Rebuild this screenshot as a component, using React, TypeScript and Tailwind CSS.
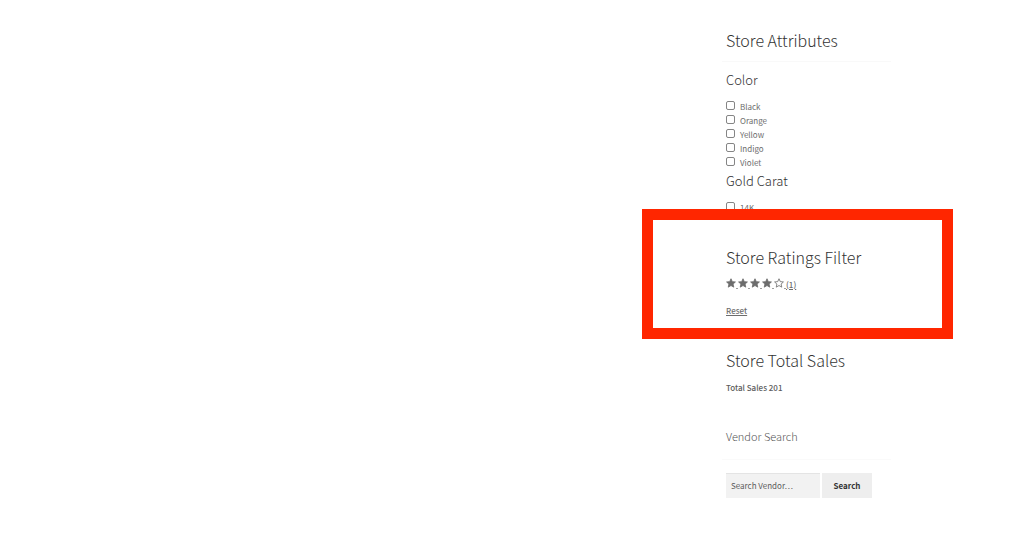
import type { ReactNode } from "react";

interface AttributeGroupProps {
  title: string;
  options: string[];
}

function WidgetTitle({ children }: { children: ReactNode }) {
  return (
    <h2 className="text-[16px] leading-6 font-light text-[#333333] whitespace-nowrap">
      {children}
    </h2>
  );
}

function AttributeGroup({ title, options }: AttributeGroupProps) {
  return (
    <section>
      <h3 className="text-[13px] leading-6 font-light text-[#333333]">{title}</h3>
      <ul className="mt-[7px]">
        {options.map((option) => (
          <li key={option}>
            <label className="flex h-3.5 items-center gap-[5px] text-[8px] leading-3.5 text-[#6d6d6d]">
              <input
                type="checkbox"
                className="mb-0.5 h-[9px] w-[9px] shrink-0 appearance-none rounded-[2px] border border-[#858585] bg-white checked:bg-[#6d6d6d]"
              />
              <span className="pt-0.5">{option}</span>
            </label>
          </li>
        ))}
      </ul>
    </section>
  );
}

function Star({ filled }: { filled: boolean }) {
  return (
    <svg
      viewBox="0 0 24 24"
      className="h-2.5 w-2.5"
      fill={filled ? "#6d6d6d" : "none"}
      stroke="#6d6d6d"
      strokeWidth="2"
    >
      <path d="M12 1.8l3.1 6.9 7.5.8-5.6 5 1.6 7.4-6.6-3.8-6.6 3.8L7 14.5l-5.6-5 7.5-.8z" />
    </svg>
  );
}

function RatingsFilter() {
  return (
    <section className="relative -mt-[5px] -mr-[66px] -ml-[84px] border-[11px] border-[#ff2600] pt-[25px] pb-[9px] pl-[73px] text-[8px] leading-4 text-[#6d6d6d]">
      <WidgetTitle>Store Ratings Filter</WidgetTitle>
      <a href="#rating-4" aria-label="4 out of 5 stars (1)" className="mt-1 flex items-center">
        {[1, 2, 3, 4, 5].map((n) => (
          <span key={n} className="flex items-center">
            <Star filled={n <= 4} />
            <span className="mt-2.5 h-px w-0.5 bg-[#a0a0a0]" />
          </span>
        ))}
        <span className="pt-1 font-medium underline">(1)</span>
      </a>
      <a href="#reset" className="mt-2.5 inline-block align-top font-medium underline">
        Reset
      </a>
    </section>
  );
}

function VendorSearch() {
  return (
    <section className="mt-7">
      <h2 className="-mx-1 border-b border-[#fafafa] px-1 pb-[11px] text-[11px] leading-6 font-light text-[#555555]">
        Vendor Search
      </h2>
      <form className="mt-[13px] flex h-[25px] gap-0.5 text-[8px]" onSubmit={(e) => e.preventDefault()}>
        <input
          type="text"
          aria-label="Search Vendor"
          placeholder="Search Vendor…"
          className="w-[94px] border-t border-[#e4e4e4] bg-[#f2f2f2] px-[5px] text-[#43454b] placeholder:text-[#5c5c5c]"
        />
        <button type="submit" className="w-[50px] bg-[#eeeeee] font-bold text-[#333333]">
          Search
        </button>
      </form>
    </section>
  );
}

export default function App() {
  return (
    <main className="flex min-h-screen justify-end bg-white pr-[137px] font-['Noto_Sans_CJK_SC','Noto_Sans',sans-serif]">
      <aside className="w-[161px] pt-7 pb-8">
        <div className="-mx-1 mb-1.5 border-b border-[#f9f9f9] px-1 pb-[9px]">
          <WidgetTitle>Store Attributes</WidgetTitle>
        </div>
        <AttributeGroup title="Color" options={["Black", "Orange", "Yellow", "Indigo", "Violet"]} />
        <AttributeGroup title="Gold Carat" options={["14K"]} />
        <RatingsFilter />
        <section className="mt-[9px]">
          <WidgetTitle>Store Total Sales</WidgetTitle>
          <p className="mt-2 text-[8px] leading-4 font-medium text-[#5c5c5c]">Total Sales 201</p>
        </section>
        <VendorSearch />
      </aside>
    </main>
  );
}
